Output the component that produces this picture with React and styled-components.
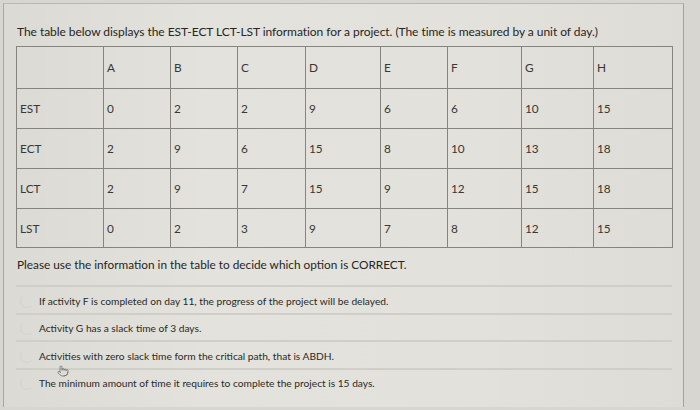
import styled, { createGlobalStyle } from 'styled-components'
import { Pointer } from 'lucide-react'

const GlobalStyle = createGlobalStyle`
  html, body {
    margin: 0;
    padding: 0;
    background: #d7d6d0;
  }
`

const Screen = styled.div`
  width: 700px;
  height: 410px;
  overflow: hidden;
  background: #d7d6d0;
  font-family: Lato, 'Open Sans', sans-serif;
  color: #262624;
`

const Panel = styled.div`
  position: relative;
  margin: 3px 0 0 3px;
  width: 681px;
  height: 404px;
  border-top: 1px solid #b9b8b2;
  border-left: 1px solid #a9a8a2;
  border-right: 1px solid #a4a39d;
  background: linear-gradient(90deg, #dbdad4 0%, #e3e2dc 30%, #e2e1db 70%, #dddcd6 100%);
  padding: 21px 0 0 12px;
  box-sizing: border-box;
`

const Title = styled.p`
  margin: 0 0 7px 1px;
  font-size: 12px;
  line-height: 14px;
  letter-spacing: -0.05px;
`

const Table = styled.table`
  border-collapse: collapse;
  border: 1px solid #6f6e69;
  table-layout: fixed;
  width: 656px;
`

const Cell = styled.td`
  width: ${p => p.$w}px;
  height: ${p => p.$h || 39}px;
  padding: 0 0 0 3px;
  border: 1px solid #85847f;
  font-size: 11.8px;
  color: #383835;
  text-align: left;
  vertical-align: middle;
  box-sizing: border-box;
`

const Question = styled.p`
  margin: 10px 0 13px 1px;
  font-size: 11.8px;
  line-height: 14px;
`

const Options = styled.div`
  width: 656px;
`

const Option = styled.label`
  display: flex;
  align-items: center;
  gap: 5px;
  height: 27.5px;
  padding: 2px 0 0 4px;
  border-top: 2px solid #cfcec8;
  font-size: 10.2px;
  color: #2a2a27;
  box-sizing: border-box;
`

const Radio = styled.span`
  width: 12px;
  height: 12px;
  border-radius: 50%;
  border: 1px solid #d3d2cc;
  border-top-color: transparent;
  border-right-color: transparent;
  flex: none;
`

const Cursor = styled.span`
  position: absolute;
  left: 53px;
  top: 361px;
  display: flex;
  color: #6d6c67;
`

const widths = [87, 67, 67, 68, 75, 67, 74, 72, 79]
const heads = ['', 'A', 'B', 'C', 'D', 'E', 'F', 'G', 'H']
const rows = [
  ['EST', '0', '2', '2', '9', '6', '6', '10', '15'],
  ['ECT', '2', '9', '6', '15', '8', '10', '13', '18'],
  ['LCT', '2', '9', '7', '15', '9', '12', '15', '18'],
  ['LST', '0', '2', '3', '9', '7', '8', '12', '15'],
]
const heights = [40, 40, 40, 39]

const options = [
  'If activity F is completed on day 11, the progress of the project will be delayed.',
  'Activity G has a slack time of 3 days.',
  'Activities with zero slack time form the critical path, that is ABDH.',
  'The minimum amount of time it requires to complete the project is 15 days.',
]

export default function App() {
  return (
    <Screen>
      <GlobalStyle />
      <Panel>
        <Title>
          The table below displays the EST-ECT LCT-LST information for a project. (The time is measured by a unit of day.)
        </Title>
        <Table>
          <tbody>
            <tr>
              {heads.map((h, i) => (
                <Cell key={i} $w={widths[i]} $h={42}>{h}</Cell>
              ))}
            </tr>
            {rows.map((r, ri) => (
              <tr key={ri}>
                {r.map((v, i) => (
                  <Cell key={i} $w={widths[i]} $h={heights[ri]}>{v}</Cell>
                ))}
              </tr>
            ))}
          </tbody>
        </Table>
        <Question>Please use the information in the table to decide which option is CORRECT.</Question>
        <Options>
          {options.map((o, i) => (
            <Option key={i}>
              <Radio />
              {o}
            </Option>
          ))}
        </Options>
        <Cursor>
          <Pointer size={12} strokeWidth={1.5} />
        </Cursor>
      </Panel>
    </Screen>
  )
}
